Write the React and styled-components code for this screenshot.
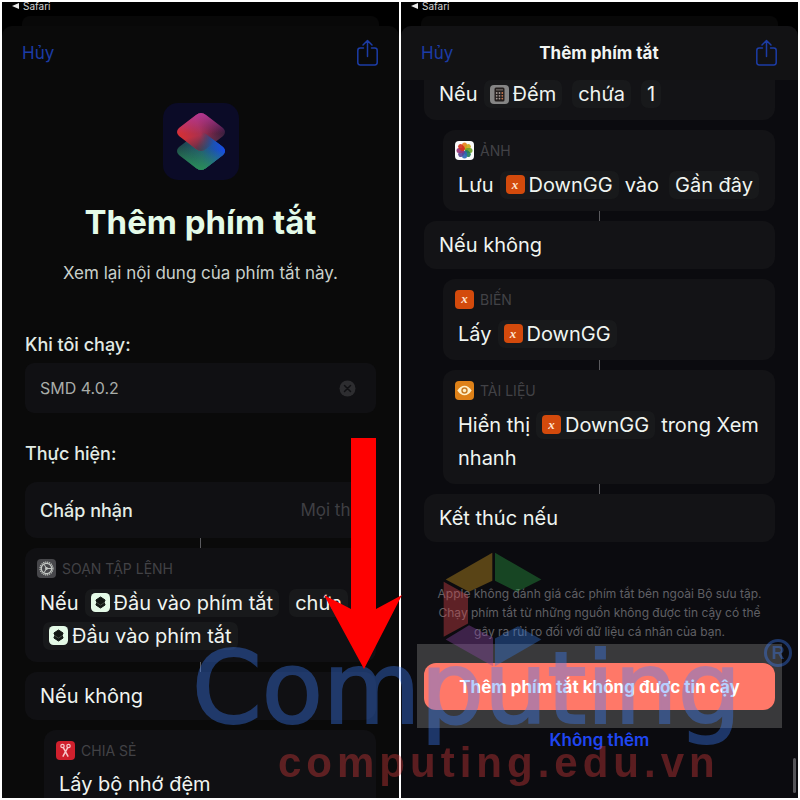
import React from "react";
import styled, { createGlobalStyle } from "styled-components";

const GlobalStyle = createGlobalStyle`
  *, *::before, *::after { box-sizing: border-box; }
  body {
    margin: 0;
    background: #ffffff;
    font-family: Inter, "Noto Sans", sans-serif;
  }
  h1, h2, h3, p { margin: 0; }
  button { border: 0; padding: 0; background: none; font: inherit; cursor: pointer; }
`;

const Page = styled.main`
  position: relative;
  display: grid;
  grid-template-columns: 1fr 1fr;
  gap: 2px;
  min-height: 100vh;
  padding: 2px;
  background: #ffffff;
`;

const Phone = styled.section`
  position: relative;
  display: flex;
  flex-direction: column;
  min-width: 0;
  background: #000000;
`;

const StatusBar = styled.div`
  display: flex;
  align-items: center;
  gap: 4px;
  height: 14px;
  padding: 0 10px 6px;
  color: #d4d4d4;
  font-size: 10px;
  line-height: 10px;
`;

const BackSheet = styled.div`
  height: 10px;
  margin: 0 20px;
  border-radius: 8px 8px 0 0;
  background: #080808;
`;

const Sheet = styled.div`
  flex: 1;
  display: flex;
  flex-direction: column;
  border-radius: 10px 10px 0 0;
  background: ${(p) => p.$tone};
`;

const NavBar = styled.header`
  display: grid;
  grid-template-columns: 1fr auto 1fr;
  align-items: center;
  height: 54px;
  padding: 0 21px 0 20px;
  border-radius: 10px 10px 0 0;
  background: ${(p) => (p.$raised ? "#121214" : "transparent")};
`;

const NavTitle = styled.h2`
  color: #f2f5f3;
  font-size: 17px;
  font-weight: 700;
  line-height: 24px;
`;

const CancelButton = styled.button`
  justify-self: start;
  color: #1c3ca6;
  font-size: 17px;
  line-height: 24px;
`;

const ShareButton = styled.button`
  grid-column: 3;
  justify-self: end;
  display: flex;
  color: #1c3ca6;
`;

const Intro = styled.div`
  display: flex;
  flex-direction: column;
  align-items: center;
  padding-top: 23px;
  text-align: center;
`;

const Title = styled.h1`
  margin-top: 18px;
  color: #e4fbe8;
  font-size: 33px;
  font-weight: 700;
  line-height: 48px;
`;

const Subtitle = styled.p`
  margin-top: 15px;
  color: #c9d0ca;
  font-size: 17px;
  line-height: 24px;
`;

const Content = styled.div`
  flex: 1;
  display: flex;
  flex-direction: column;
  padding: 0 23px;
`;

const FieldLabel = styled.label`
  display: block;
  margin-top: 48px;
  color: #e2ebe4;
  font-size: 18px;
  font-weight: 500;
  line-height: 24px;
`;

const SectionTitle = styled.h2`
  margin-top: 29px;
  color: #e2ebe4;
  font-size: 18px;
  font-weight: 500;
  line-height: 24px;
`;

const Field = styled.div`
  display: flex;
  align-items: center;
  height: 50px;
  margin-top: 6px;
  padding: 0 20px 0 15px;
  border-radius: 9px;
  background: #101013;
`;

const FieldInput = styled.input`
  flex: 1;
  min-width: 0;
  padding: 0;
  border: 0;
  outline: 0;
  background: transparent;
  color: #a9ada9;
  font: 16px Inter, "Noto Sans", sans-serif;
`;

const ClearButton = styled.button`
  display: flex;
`;

const cardPadding = {
  plain: "7px 15px 8px",
  headed: "10px 12px",
  tail: "0 15px 12px",
  head: "10px 12px 0",
};

const cardRadius = {
  plain: "12px",
  headed: "12px",
  tail: "0 0 12px 12px",
  head: "12px 12px 0 0",
};

const Card = styled.article`
  flex: ${(p) => (p.$kind === "head" ? 1 : "none")};
  margin-top: ${(p) => p.$gap || 0}px;
  margin-left: ${(p) => (p.$nested ? 19 : 0)}px;
  padding: ${(p) => cardPadding[p.$kind || "plain"]};
  border-radius: ${(p) => cardRadius[p.$kind || "plain"]};
  background: ${(p) => (p.$light ? "#131316" : "#101013")};
`;

const AcceptRow = styled(Card)`
  display: flex;
  align-items: center;
  justify-content: space-between;
  height: 56px;
  margin-top: 16px;
  padding: 0 15px;
  color: #e4ede6;
  font-size: 18px;
  font-weight: 500;
`;

const Muted = styled.span`
  color: #3f3f43;
  font-size: 17px;
  font-weight: 400;
`;

const Connector = styled.div`
  align-self: center;
  width: 1px;
  height: 10px;
  background: #5a5a5e;
`;

const CardHeader = styled.h3`
  display: flex;
  align-items: center;
  gap: 6px;
  height: 20px;
  color: #424246;
  font-size: 14px;
  font-weight: 400;
`;

const Lines = styled.div`
  padding: ${(p) => (p.$compact ? 10 : 8)}px 4px 0 3px;
`;

const Token = styled.span`
  display: inline-flex;
  align-items: center;
  gap: 4px;
  height: 28px;
  padding: 0 6px;
  border-radius: 7px;
  background: #18191b;

  & + & { margin-left: 4px; }
`;

const Line = styled.p`
  display: flex;
  align-items: center;
  gap: 6px;
  height: ${(p) => (p.$short ? 28 : 33)}px;
  padding-left: ${(p) => (p.$indent ? 3 : 0)}px;
  color: #f0f5f1;
  font-size: 20px;
  line-height: 28px;
  white-space: nowrap;
`;

const Disclaimer = styled.p`
  margin-top: 42px;
  color: #606065;
  font-size: 12px;
  line-height: 19px;
  text-align: center;
`;

const Actions = styled.div`
  display: flex;
  flex-direction: column;
`;

const Highlight = styled.div`
  display: flex;
  margin: 3px -7px 0;
  padding: 19px 7px 18px;
  background: #39393b;
`;

const PrimaryButton = styled.button`
  flex: 1;
  height: 47px;
  border-radius: 12px;
  background: #ff7868;
  color: #ffffff;
  font-size: 17px;
  font-weight: 700;
`;

const SecondaryButton = styled.button`
  align-self: center;
  color: #1f46f2;
  font-size: 17px;
  font-weight: 600;
  line-height: 24px;
`;

const ScrollThumb = styled.div`
  position: absolute;
  right: 2px;
  bottom: 5px;
  width: 3px;
  height: 35px;
  border-radius: 2px;
  background: #56565a;
`;

const ArrowOverlay = styled.svg`
  position: absolute;
  z-index: 2;
  top: 434px;
  right: -4px;
  pointer-events: none;
`;

const Watermark = styled.div`
  position: absolute;
  z-index: 1;
  top: 550px;
  left: 192px;
  width: 600px;
  pointer-events: none;
`;

const WatermarkMark = styled.svg`
  display: block;
  margin-left: 251px;
  opacity: 0.38;
`;

const Wordmark = styled.div`
  display: flex;
  align-items: flex-start;
  justify-content: space-between;
  height: 78px;
  margin-top: -28px;
  color: #3d80ff;
  opacity: 0.37;
  font-family: "DejaVu Sans", sans-serif;
  font-size: 100px;
  line-height: 100px;
  -webkit-text-stroke: 2px #3d80ff;
`;

const Registered = styled.span`
  display: flex;
  align-items: center;
  justify-content: center;
  width: 28px;
  height: 28px;
  border: 3px solid #3d80ff;
  border-radius: 50%;
  font: 700 18px "Liberation Sans", sans-serif;
  -webkit-text-stroke: 0;
`;

const Domain = styled.div`
  margin: 22px 0 0 86px;
  color: #dc3c3c;
  opacity: 0.38;
  font: 700 42px/48px "Liberation Sans", sans-serif;
  letter-spacing: 5px;
`;

const ShareIcon = () => (
  <svg width="21" height="28" viewBox="0 0 21 28" fill="none" stroke="currentColor" strokeWidth="1.5" strokeLinecap="round" strokeLinejoin="round">
    <path d="M6.5 9H3.2Q.8 9 .8 11.4v12.2Q.8 26 3.2 26h14.6q2.4 0 2.4-2.4V11.4Q20.2 9 17.8 9h-3.3M10.5 17.5V1.5M6 6l4.5-4.5L15 6" />
  </svg>
);

const BackArrow = () => (
  <svg width="7" height="6" viewBox="0 0 7 6"><path d="M7 0v6L0 3z" fill="#e8e8e8" /></svg>
);

const upperTile = "M33 12 16 25q-4 4 0 8l17 13q5 4 10 0l17-13q4-4 0-8L43 12q-5-4-10 0z";
const lowerTile = "M33 31 16 44q-4 4 0 8l17 13q5 4 10 0l17-13q4-4 0-8L43 31q-5-4-10 0z";

const AppIcon = () => (
  <svg width="76" height="77" viewBox="0 0 76 77">
    <defs>
      <linearGradient id="warm" x1="0" y1=".7" x2="1" y2=".45">
        <stop offset="0" stopColor="#dc3030" />
        <stop offset=".5" stopColor="#a83050" />
        <stop offset="1" stopColor="#2a1638" />
      </linearGradient>
      <linearGradient id="pink" x1=".5" y1="0" x2=".5" y2="1">
        <stop offset="0" stopColor="#b8389a" stopOpacity=".9" />
        <stop offset=".55" stopColor="#b8389a" stopOpacity="0" />
      </linearGradient>
      <linearGradient id="shade" x1=".4" y1=".4" x2=".6" y2="1">
        <stop offset=".3" stopColor="#4a3048" stopOpacity="0" />
        <stop offset="1" stopColor="#4a3048" />
      </linearGradient>
      <linearGradient id="cool" x1="0" y1=".5" x2="1" y2=".4">
        <stop offset="0" stopColor="#1c3c44" />
        <stop offset=".5" stopColor="#235c70" />
        <stop offset="1" stopColor="#164bea" />
      </linearGradient>
      <linearGradient id="green" x1=".4" y1="1" x2=".6" y2="0">
        <stop offset="0" stopColor="#2b9058" />
        <stop offset=".6" stopColor="#2b9058" stopOpacity="0" />
      </linearGradient>
      <linearGradient id="reveal" gradientUnits="userSpaceOnUse" x1="36" y1="36" x2="50" y2="42">
        <stop offset="0" stopColor="#000" />
        <stop offset="1" stopColor="#fff" />
      </linearGradient>
      <mask id="rightSide"><rect width="76" height="77" fill="url(#reveal)" /></mask>
    </defs>
    <rect width="76" height="77" rx="15" fill="#0b0b27" />
    <path d={lowerTile} fill="url(#cool)" />
    <path d={lowerTile} fill="url(#green)" />
    <path d={upperTile} fill="url(#warm)" />
    <path d={upperTile} fill="url(#pink)" />
    <path d={upperTile} fill="url(#shade)" />
    <g mask="url(#rightSide)">
      <path d={lowerTile} fill="url(#cool)" />
      <path d={lowerTile} fill="url(#green)" />
    </g>
  </svg>
);

const ClearIcon = () => (
  <svg width="17" height="17" viewBox="0 0 17 17">
    <circle cx="8.5" cy="8.5" r="8" fill="#2d2d30" />
    <path d="m5.5 5.5 6 6m0-6-6 6" stroke="#101013" strokeWidth="1.5" strokeLinecap="round" />
  </svg>
);

const GearIcon = () => (
  <svg width="19" height="19" viewBox="0 0 19 19">
    <rect width="19" height="19" rx="4" fill="#47474b" />
    <g fill="none" stroke="#c4c8c4">
      <circle cx="9.5" cy="9.5" r="6.4" strokeWidth="1.3" strokeDasharray="1.2 .8" />
      <circle cx="9.5" cy="9.5" r="5.2" strokeWidth="1.2" />
      <path d="M9.5 9.5h5M9.5 9.5 7 5.2M9.5 9.5 7 13.8" />
    </g>
    <circle cx="9.5" cy="9.5" r="1.4" fill="#c4c8c4" />
  </svg>
);

const InputIcon = () => (
  <svg width="19" height="19" viewBox="0 0 19 19">
    <rect width="19" height="19" rx="4.5" fill="#e4fae7" />
    <path d="m9.5 4 4.6 3-1 2.3 1 2.7-4.6 3-4.6-3 1-2.7-1-2.3z" fill="#111713" stroke="#111713" strokeLinejoin="round" />
    <path d="m5.7 9.6 3.8 2.5 3.8-2.5" fill="none" stroke="#576158" strokeWidth=".7" />
  </svg>
);

const ScissorsIcon = () => (
  <svg width="19" height="19" viewBox="0 0 19 19">
    <rect width="19" height="19" rx="4" fill="#cf202d" />
    <g fill="none" stroke="#f6c8ca" strokeWidth="1.2" strokeLinecap="round">
      <circle cx="6.5" cy="5" r="1.7" />
      <circle cx="12.5" cy="5" r="1.7" />
      <path d="m7.3 6.6 4.6 8.6M11.7 6.6 7.1 15.2" strokeWidth="1.5" />
    </g>
  </svg>
);

const CalculatorIcon = () => (
  <svg width="19" height="19" viewBox="0 0 19 19">
    <rect width="19" height="19" rx="4" fill="#858585" />
    <rect x="4.5" y="2.5" width="10" height="14" rx="1.5" fill="#241f1e" />
    <path d="M6 4.8h7" stroke="#5c5653" strokeWidth="1.6" />
    {[8, 10.8, 13.6].map((y) =>
      [6.7, 9.5, 12.3].map((x) => <circle key={`${x}-${y}`} cx={x} cy={y} r=".9" fill={x > 12 ? "#c9784f" : "#a39a96"} />)
    )}
  </svg>
);

const petals = ["#e8811c", "#c9a91c", "#6fa32a", "#23805a", "#2b68b4", "#5a4698", "#983478", "#d3321f"];

const PhotosIcon = () => (
  <svg width="19" height="19" viewBox="0 0 19 19">
    <rect width="19" height="19" rx="4" fill="#fafafa" />
    {petals.map((color, i) => (
      <rect key={color} x="7" y="1.5" width="5" height="7.6" rx="2.5" fill={color} fillOpacity=".92" transform={`rotate(${i * 45} 9.5 9.5)`} />
    ))}
  </svg>
);

const VariableIcon = styled.span.attrs({ children: "x" })`
  display: inline-flex;
  align-items: center;
  justify-content: center;
  width: 19px;
  height: 19px;
  border-radius: 4px;
  background: #d34a0c;
  color: #ffe3cf;
  font: italic 700 13px/16px "Liberation Serif", serif;
`;

const EyeIcon = () => (
  <svg width="19" height="19" viewBox="0 0 19 19">
    <rect width="19" height="19" rx="4" fill="#de8118" />
    <path d="M2.3 9.5q3.2-4.7 7.2-4.7t7.2 4.7q-3.2 4.7-7.2 4.7T2.3 9.5z" fill="#fff0c8" />
    <circle cx="9.5" cy="9.5" r="3.2" fill="#c77a22" />
    <circle cx="9.5" cy="9.5" r="1.7" fill="#fff0c8" />
  </svg>
);

function Status() {
  return (
    <>
      <StatusBar><BackArrow />Safari</StatusBar>
      <BackSheet />
    </>
  );
}

function Nav({ title }) {
  return (
    <NavBar $raised={Boolean(title)}>
      <CancelButton type="button">Hủy</CancelButton>
      {title && <NavTitle>{title}</NavTitle>}
      <ShareButton type="button" aria-label="Chia sẻ"><ShareIcon /></ShareButton>
    </NavBar>
  );
}

function ReviewScreen() {
  return (
    <Phone>
      <Status />
      <Sheet $tone="#0a0a0a">
        <Nav />
        <Intro>
          <AppIcon />
          <Title>Thêm phím tắt</Title>
          <Subtitle>Xem lại nội dung của phím tắt này.</Subtitle>
        </Intro>
        <Content>
          <FieldLabel htmlFor="shortcut-name">Khi tôi chạy:</FieldLabel>
          <Field>
            <FieldInput id="shortcut-name" defaultValue="SMD 4.0.2" />
            <ClearButton type="button" aria-label="Xóa"><ClearIcon /></ClearButton>
          </Field>
          <SectionTitle>Thực hiện:</SectionTitle>
          <AcceptRow>
            Chấp nhận
            <Muted>Mọi thứ</Muted>
          </AcceptRow>
          <Connector />
          <Card $kind="headed">
            <CardHeader><GearIcon />SOẠN TẬP LỆNH</CardHeader>
            <Lines>
              <Line>Nếu <Token><InputIcon />Đầu vào phím tắt</Token><Token>chứa</Token></Line>
              <Line $indent><Token><InputIcon />Đầu vào phím tắt</Token></Line>
            </Lines>
          </Card>
          <Connector />
          <Card><Line>Nếu không</Line></Card>
          <Card $nested $kind="head" $gap={10}>
            <CardHeader><ScissorsIcon />CHIA SẺ</CardHeader>
            <Lines $compact><Line $short>Lấy bộ nhớ đệm</Line></Lines>
          </Card>
        </Content>
      </Sheet>
      <ArrowOverlay width="80" height="233" viewBox="0 0 80 233" aria-hidden="true">
        <path d="M28 2h25v171l26-14-38 74L1 159l27 14z" fill="#ff0000" />
      </ArrowOverlay>
    </Phone>
  );
}

function ConfirmScreen() {
  return (
    <Phone>
      <Status />
      <Sheet $tone="#0b0b0f">
        <Nav title="Thêm phím tắt" />
        <Content>
          <Card $light $kind="tail">
            <Line $short>Nếu <Token><CalculatorIcon />Đếm</Token><Token>chứa</Token><Token>1</Token></Line>
          </Card>
          <Card $light $nested $kind="headed" $gap={10}>
            <CardHeader><PhotosIcon />ẢNH</CardHeader>
            <Lines>
              <Line>Lưu <Token><VariableIcon />DownGG</Token> vào <Token>Gần đây</Token></Line>
            </Lines>
          </Card>
          <Connector />
          <Card $light><Line>Nếu không</Line></Card>
          <Card $light $nested $kind="headed" $gap={10}>
            <CardHeader><VariableIcon />BIẾN</CardHeader>
            <Lines><Line>Lấy <Token><VariableIcon />DownGG</Token></Line></Lines>
          </Card>
          <Connector />
          <Card $light $nested $kind="headed">
            <CardHeader><EyeIcon />TÀI LIỆU</CardHeader>
            <Lines>
              <Line>Hiển thị <Token><VariableIcon />DownGG</Token> trong Xem</Line>
              <Line>nhanh</Line>
            </Lines>
          </Card>
          <Connector />
          <Card $light><Line>Kết thúc nếu</Line></Card>
          <Disclaimer>
            Apple không đánh giá các phím tắt bên ngoài Bộ sưu tập.<br />
            Chạy phím tắt từ những nguồn không được tin cậy có thể<br />
            gây ra rủi ro đối với dữ liệu cá nhân của bạn.
          </Disclaimer>
          <Actions>
            <Highlight><PrimaryButton type="button">Thêm phím tắt không được tin cậy</PrimaryButton></Highlight>
            <SecondaryButton type="button">Không thêm</SecondaryButton>
          </Actions>
        </Content>
      </Sheet>
      <ScrollThumb />
    </Phone>
  );
}

export default function App() {
  return (
    <>
      <GlobalStyle />
      <Page>
        <ReviewScreen />
        <ConfirmScreen />
        <Watermark>
          <WatermarkMark width="100" height="117" viewBox="130 30 300 350">
            <path d="m278 38-140 80 70 37 70-33z" fill="#d7a022" />
            <path d="m286 38 139 80-73 37-66-33z" fill="#2ba544" />
            <path d="m132 125 73 40v85l-73 40z" fill="#e4474c" />
            <path d="m138 298 70-43 72 37v86z" fill="#8e48a8" />
            <path d="m286 378 139-80-70-40-69 37z" fill="#3478df" />
          </WatermarkMark>
          <Wordmark>Computing<Registered>R</Registered></Wordmark>
          <Domain>computing.edu.vn</Domain>
        </Watermark>
      </Page>
    </>
  );
}
